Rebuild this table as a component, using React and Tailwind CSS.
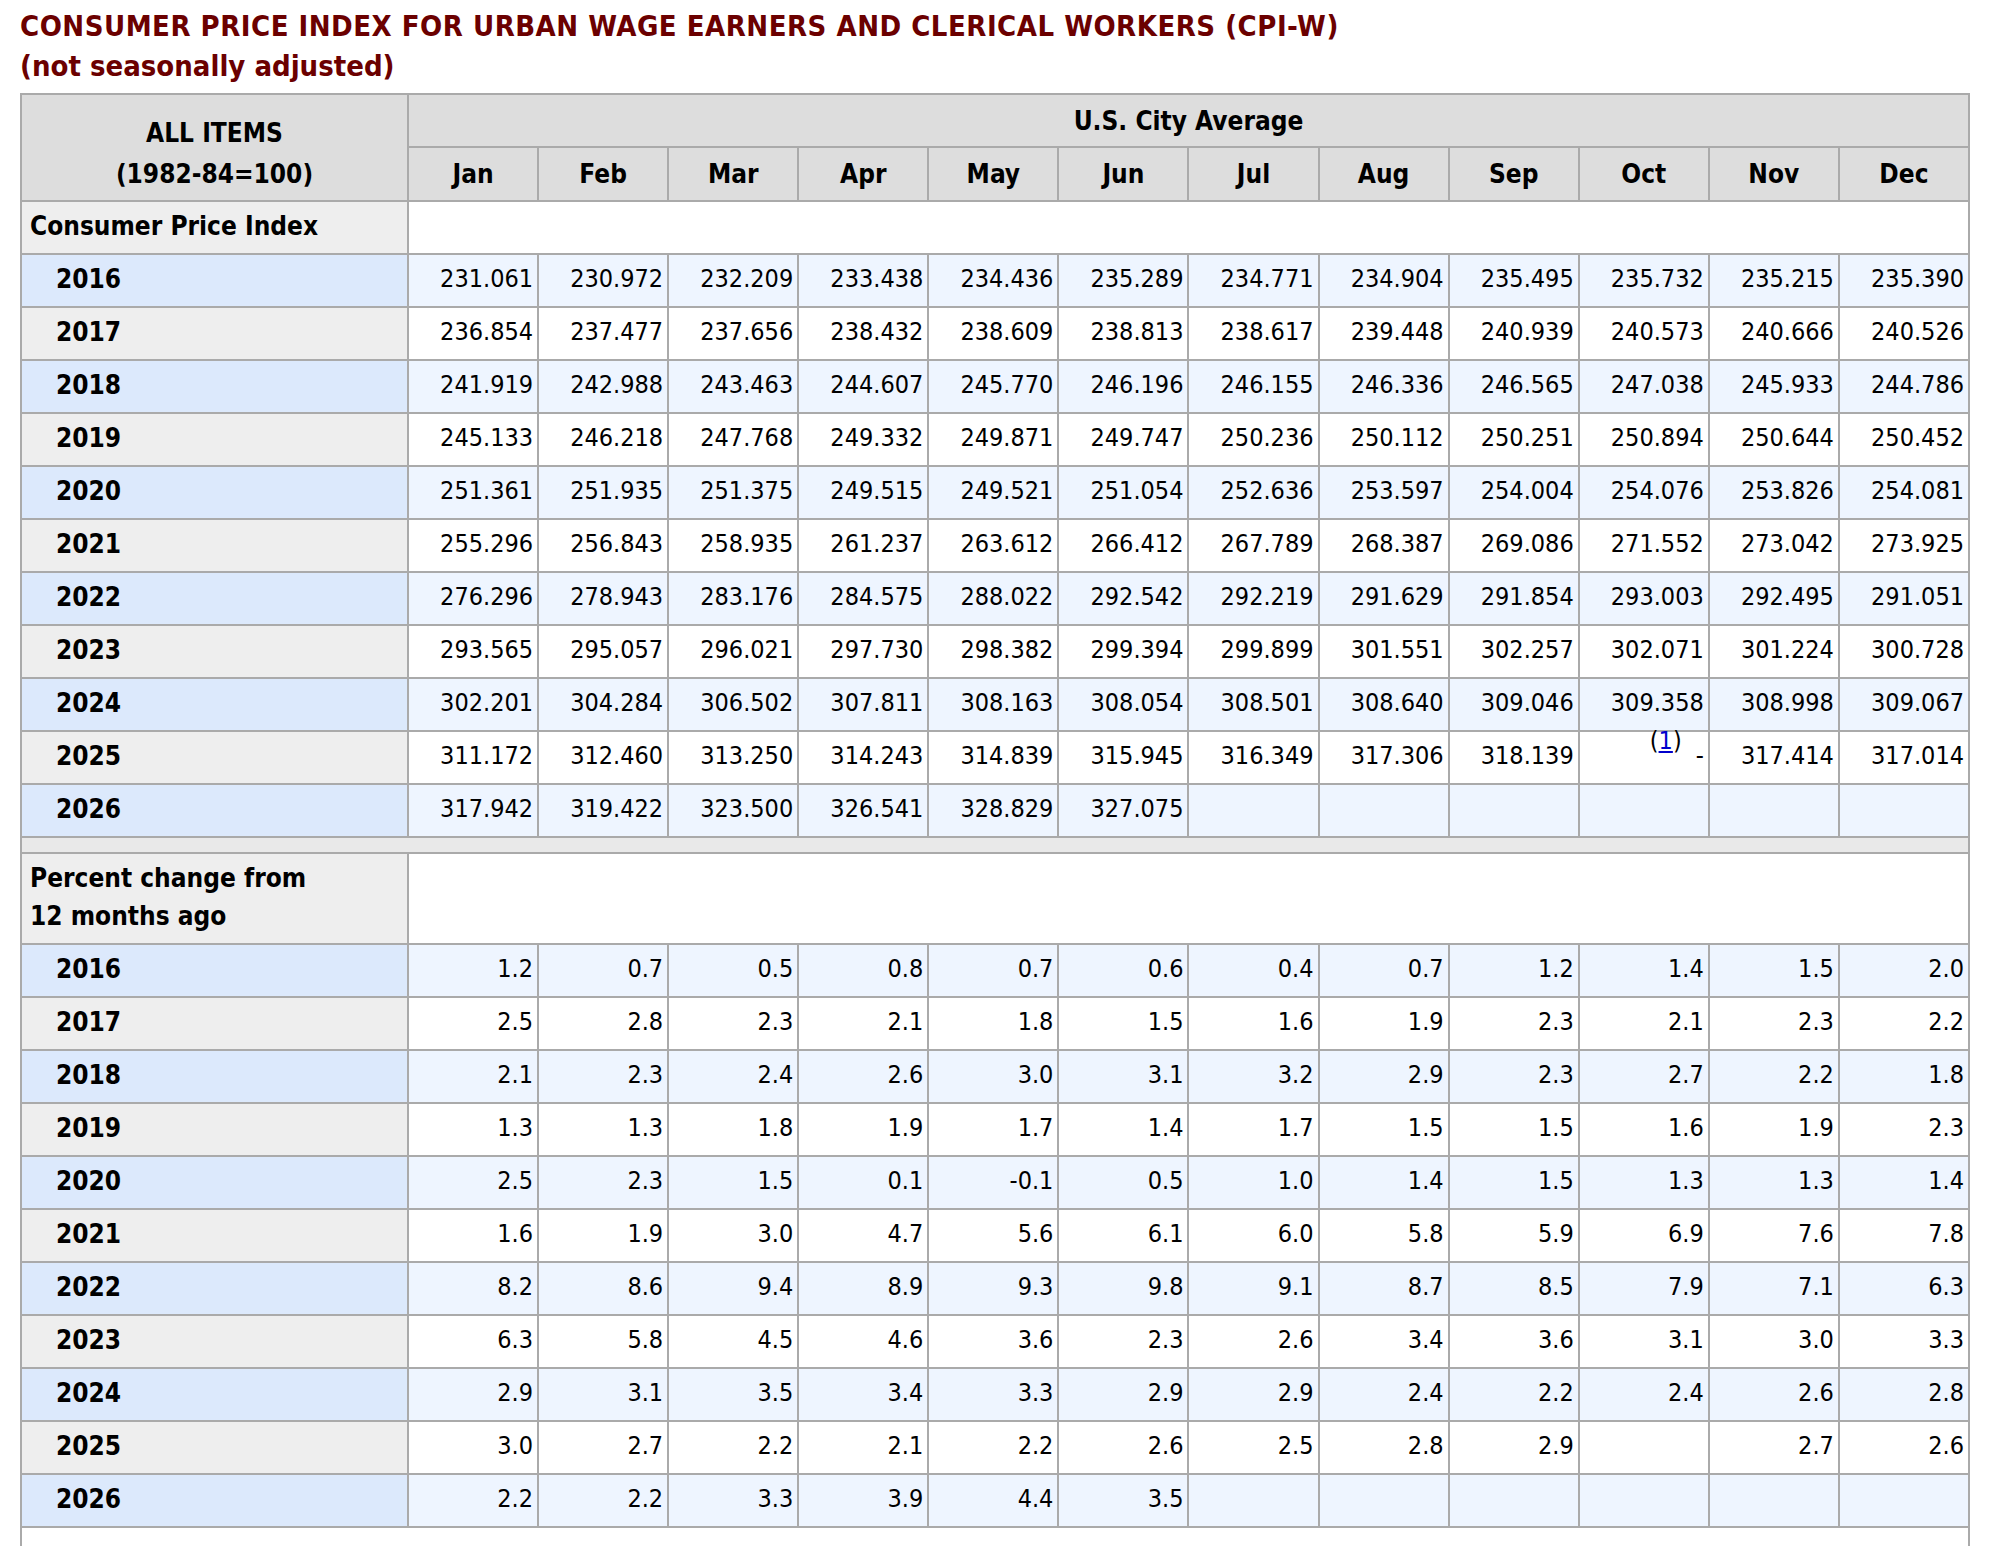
import React from "react";

const months = ["Jan","Feb","Mar","Apr","May","Jun","Jul","Aug","Sep","Oct","Nov","Dec"];

const cpi = [
  ["2016", "231.061 230.972 232.209 233.438 234.436 235.289 234.771 234.904 235.495 235.732 235.215 235.390"],
  ["2017", "236.854 237.477 237.656 238.432 238.609 238.813 238.617 239.448 240.939 240.573 240.666 240.526"],
  ["2018", "241.919 242.988 243.463 244.607 245.770 246.196 246.155 246.336 246.565 247.038 245.933 244.786"],
  ["2019", "245.133 246.218 247.768 249.332 249.871 249.747 250.236 250.112 250.251 250.894 250.644 250.452"],
  ["2020", "251.361 251.935 251.375 249.515 249.521 251.054 252.636 253.597 254.004 254.076 253.826 254.081"],
  ["2021", "255.296 256.843 258.935 261.237 263.612 266.412 267.789 268.387 269.086 271.552 273.042 273.925"],
  ["2022", "276.296 278.943 283.176 284.575 288.022 292.542 292.219 291.629 291.854 293.003 292.495 291.051"],
  ["2023", "293.565 295.057 296.021 297.730 298.382 299.394 299.899 301.551 302.257 302.071 301.224 300.728"],
  ["2024", "302.201 304.284 306.502 307.811 308.163 308.054 308.501 308.640 309.046 309.358 308.998 309.067"],
  ["2025", "311.172 312.460 313.250 314.243 314.839 315.945 316.349 317.306 318.139 FOOT 317.414 317.014"],
  ["2026", "317.942 319.422 323.500 326.541 328.829 327.075 _ _ _ _ _ _"],
];

const pct = [
  ["2016", "1.2 0.7 0.5 0.8 0.7 0.6 0.4 0.7 1.2 1.4 1.5 2.0"],
  ["2017", "2.5 2.8 2.3 2.1 1.8 1.5 1.6 1.9 2.3 2.1 2.3 2.2"],
  ["2018", "2.1 2.3 2.4 2.6 3.0 3.1 3.2 2.9 2.3 2.7 2.2 1.8"],
  ["2019", "1.3 1.3 1.8 1.9 1.7 1.4 1.7 1.5 1.5 1.6 1.9 2.3"],
  ["2020", "2.5 2.3 1.5 0.1 -0.1 0.5 1.0 1.4 1.5 1.3 1.3 1.4"],
  ["2021", "1.6 1.9 3.0 4.7 5.6 6.1 6.0 5.8 5.9 6.9 7.6 7.8"],
  ["2022", "8.2 8.6 9.4 8.9 9.3 9.8 9.1 8.7 8.5 7.9 7.1 6.3"],
  ["2023", "6.3 5.8 4.5 4.6 3.6 2.3 2.6 3.4 3.6 3.1 3.0 3.3"],
  ["2024", "2.9 3.1 3.5 3.4 3.3 2.9 2.9 2.4 2.2 2.4 2.6 2.8"],
  ["2025", "3.0 2.7 2.2 2.1 2.2 2.6 2.5 2.8 2.9 _ 2.7 2.6"],
  ["2026", "2.2 2.2 3.3 3.9 4.4 3.5 _ _ _ _ _ _"],
];

function Footnote() {
  return (
    <span>
      <span className="relative -top-[15px] mr-[14px]">
        (<a href="#" className="text-[#0000cc] underline">1</a>)
      </span>
      -
    </span>
  );
}

function DataRows({ rows }) {
  return rows.map(([year, vals], i) => {
    const blue = i % 2 === 0;
    return (
      <tr key={year} className="h-[53px]">
        <th
          className={`border-2 border-[#aaaaaa] pb-[3px] pl-[34px] text-left font-bold ${
            blue ? "bg-[#dce9fc]" : "bg-[#eeeeee]"
          }`}
        >
          {year}
        </th>
        {vals.split(" ").map((v, j) => (
          <td
            key={j}
            className={`border-2 border-[#aaaaaa] pb-[3px] pr-[4px] text-right text-[25px] ${
              blue ? "bg-[#eef5ff]" : "bg-white"
            }`}
          >
            {v === "FOOT" ? <Footnote /> : v === "_" ? "" : v}
          </td>
        ))}
      </tr>
    );
  });
}

export default function App() {
  return (
    <div className="min-h-[1546px] bg-white px-[20px] pt-[6px] font-['DejaVu_Sans_Condensed','DejaVu_Sans',sans-serif] text-[26px] text-black">
      <h1 className="text-[29px] font-bold leading-[40px] text-[#6b0000]">
        <span className="tracking-[0.5px]">
          CONSUMER PRICE INDEX FOR URBAN WAGE EARNERS AND CLERICAL WORKERS (CPI-W)
        </span>
        <br />
        (not seasonally adjusted)
      </h1>
      <table className="mt-[7px] w-[1950px] table-fixed border-collapse border-2 border-[#aaaaaa] leading-[32px]">
        <colgroup>
          <col className="w-[387px]" />
          {months.map((m) => (
            <col key={m} />
          ))}
        </colgroup>
        <thead>
          <tr className="h-[53px] bg-[#dddddd]">
            <th rowSpan={2} className="border-2 border-[#aaaaaa] pt-[12px] text-center font-bold leading-[41px]">
              ALL ITEMS
              <br />
              (1982-84=100)
            </th>
            <th colSpan={12} className="border-2 border-[#aaaaaa] text-center font-bold">
              U.S. City Average
            </th>
          </tr>
          <tr className="h-[54px] bg-[#dddddd]">
            {months.map((m) => (
              <th key={m} className="border-2 border-[#aaaaaa] text-center font-bold">
                {m}
              </th>
            ))}
          </tr>
        </thead>
        <tbody>
          <tr className="h-[53px]">
            <th className="border-2 border-[#aaaaaa] bg-[#eeeeee] pb-[3px] pl-[8px] text-left font-bold">
              Consumer Price Index
            </th>
            <td colSpan={12} className="border-2 border-[#aaaaaa] bg-white"></td>
          </tr>
          <DataRows rows={cpi} />
          <tr className="h-[16px]">
            <td colSpan={13} className="border-2 border-[#aaaaaa] bg-[#e9e9e9] p-0"></td>
          </tr>
          <tr className="h-[91px]">
            <th className="border-2 border-[#aaaaaa] bg-[#eeeeee] pb-[3px] pl-[8px] text-left font-bold leading-[38px]">
              Percent change from
              <br />
              12 months ago
            </th>
            <td colSpan={12} className="border-2 border-[#aaaaaa] bg-white"></td>
          </tr>
          <DataRows rows={pct} />
          <tr className="h-[53px]">
            <td colSpan={13} className="border-2 border-[#aaaaaa] bg-white"></td>
          </tr>
        </tbody>
      </table>
    </div>
  );
}
